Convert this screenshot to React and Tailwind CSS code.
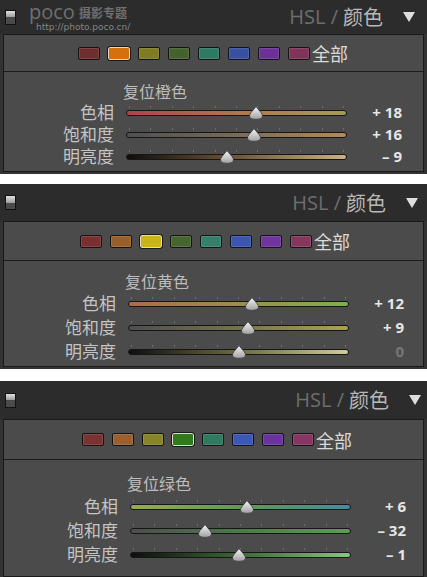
const cjk = { fontFamily: '"Noto Sans CJK SC", "Noto Sans", sans-serif' };

const panels = [
  {
    key: "orange",
    logo: true,
    headerH: "h-[34px]",
    headerPr: "pr-[12px]",
    swatchH: "h-[37px]",
    shift: "pl-0",
    sectionPt: "pt-[9px] pb-[4px]",
    titleH: "h-[20px]",
    rowH: "h-[22px]",
    gapTop: "mt-0",
    title: "复位橙色",
    selected: 1,
    swatches: ["#6e2e2e", "#d4700e", "#7f7c22", "#44612e", "#2f7a62", "#3a50a0", "#6a3294", "#803458"],
    rows: [
      { label: "色相", value: 18, text: "+ 18", track: "bg-[linear-gradient(to_right,#a8454d,#b2764a_50%,#a39d55)]" },
      { label: "饱和度", value: 16, text: "+ 16", track: "bg-[linear-gradient(to_right,#505050,#7a6a55_50%,#b58a58)]" },
      { label: "明亮度", value: -9, text: "– 9", track: "bg-[linear-gradient(to_right,#0e0e0e,#6e5638_50%,#cdb088)]" },
    ],
  },
  {
    key: "yellow",
    logo: false,
    headerH: "h-[37px]",
    headerPr: "pr-[9px]",
    swatchH: "h-[39px]",
    shift: "pl-[2px]",
    sectionPt: "pt-[10px] pb-[3px]",
    titleH: "h-[20px]",
    rowH: "h-[24px]",
    gapTop: "mt-[10px]",
    title: "复位黄色",
    selected: 2,
    swatches: ["#7a3030", "#9a5f28", "#c9b614", "#466530", "#35806a", "#3c55b0", "#70349c", "#86375e"],
    rows: [
      { label: "色相", value: 12, text: "+ 12", track: "bg-[linear-gradient(to_right,#b06a48,#9c8e4c_50%,#7fb04a)]" },
      { label: "饱和度", value: 9, text: "+ 9", track: "bg-[linear-gradient(to_right,#4e4e4e,#76724c_50%,#aaa450)]" },
      { label: "明亮度", value: 0, text: "0", dim: true, track: "bg-[linear-gradient(to_right,#0e0e0e,#6c6a40_50%,#d0cc9a)]" },
    ],
  },
  {
    key: "green",
    logo: false,
    headerH: "h-[38px]",
    headerPr: "pr-[6px]",
    swatchH: "h-[40px]",
    shift: "pl-[4px]",
    sectionPt: "pt-[12px] pb-[10px]",
    titleH: "h-[22px]",
    rowH: "h-[24px]",
    gapTop: "mt-[12px]",
    title: "复位绿色",
    selected: 3,
    swatches: ["#7a3232", "#9a6030", "#8a8428", "#2f7a1a", "#307a62", "#3a58b8", "#6a34a0", "#863660"],
    rows: [
      { label: "色相", value: 6, text: "+ 6", track: "bg-[linear-gradient(to_right,#9aac48,#5c9c50_50%,#3f8ea0)]" },
      { label: "饱和度", value: -32, text: "– 32", track: "bg-[linear-gradient(to_right,#4e4e4e,#4c7a48_50%,#58a050)]" },
      { label: "明亮度", value: -1, text: "– 1", track: "bg-[linear-gradient(to_right,#0e0e0e,#3a6a34_50%,#86c878)]" },
    ],
  },
];

function Slider({ value, track }) {
  const ticks = Array.from({ length: 11 });
  return (
    <div className="relative w-[221px] h-[14px] flex flex-col">
      <div className="flex justify-between px-[3px] h-[5px] pt-[1px]">
        {ticks.map((_, i) => (
          <span key={i} className="w-px h-[2px] bg-[#707070]" />
        ))}
      </div>
      <div className={`w-full h-[6px] rounded-full border border-[#161616] ${track}`} />
      {/* thumb */}
      <svg
        className="absolute top-[1px] -ml-[8px]"
        style={{ left: `${50 + value / 2}%` }}
        width="16"
        height="14"
        viewBox="0 0 16 14"
      >
        <defs>
          <linearGradient id="thumb" x1="0" y1="0" x2="0" y2="1">
            <stop offset="0" stopColor="#f4f4f4" />
            <stop offset="1" stopColor="#a0a0a0" />
          </linearGradient>
        </defs>
        <path
          d="M8 0.6 L13 6.5 Q15.4 9 14.2 11.4 Q13 13.4 8 13.4 Q3 13.4 1.8 11.4 Q0.6 9 3 6.5 Z"
          fill="url(#thumb)"
          stroke="#333"
          strokeWidth="0.8"
        />
      </svg>
    </div>
  );
}

function Panel({ p }) {
  return (
    <div className={`bg-[#333333] pb-[2px] ${p.gapTop}`}>
      {/* header */}
      <div className={`flex items-center bg-[#2c2c2c] ${p.headerH} ${p.headerPr}`}>
        <div className="ml-[5px] w-[11px] h-[15px] border border-[#111] flex flex-col">
          <div className="h-1/2 bg-[linear-gradient(#e0e0e0,#9c9c9c)]" />
          <div className="h-1/2 bg-[#4a4a4a]" />
        </div>
        {p.logo && (
          <div className="ml-[13px] flex flex-col">
            <div className="flex items-center gap-[4px] h-[20px]">
              <span className="text-[20px] text-[#6f6f6f] leading-[20px]" style={{ fontFamily: '"Open Sans", sans-serif' }}>
                poco
              </span>
              <span className="mt-[2px] text-[12px] font-bold text-[#707070] leading-[14px]" style={cjk}>
                摄影专题
              </span>
            </div>
            <span className="ml-[7px] text-[9px] text-[#858585] leading-[10px]" style={{ fontFamily: '"DejaVu Sans", sans-serif' }}>
              http://photo.poco.cn/
            </span>
          </div>
        )}
        <div className="ml-auto flex items-center text-[20px] leading-none" style={cjk}>
          <span className="text-[#6e6e6e]" style={{ fontFamily: '"Open Sans", sans-serif' }}>
            HSL /
          </span>
          <span className="ml-[5px] text-[#b8b8b8]">颜色</span>
        </div>
        <svg className="ml-[20px]" width="12" height="10" viewBox="0 0 12 10">
          <path d="M0 0 H12 L6 10 Z" fill="#dedede" />
        </svg>
      </div>

      {/* inner box */}
      <div className="mx-[3px] border border-[#1a1a1a] bg-[#4b4b4b]">
        <div className={`flex items-center border-b border-[#1c1c1c] ${p.swatchH} ${p.shift}`}>
          <div className="ml-[74px] flex items-center gap-[8px]">
            {p.swatches.map((c, i) => (
              <span
                key={i}
                className={
                  i === p.selected
                    ? "w-[22px] h-[13px] rounded-[2px] border border-[#e8d8c8] outline outline-1 outline-[#1a1a1a]"
                    : "w-[22px] h-[13px] rounded-[2px] border border-[#141414] shadow-[inset_0_0_0_1px_rgba(255,255,255,0.12)]"
                }
                style={{ backgroundColor: c }}
              />
            ))}
          </div>
          <span className="ml-[2px] text-[18px] leading-[20px] text-[#dadada]" style={cjk}>
            全部
          </span>
        </div>

        <div className={`${p.sectionPt} ${p.shift}`} style={cjk}>
          <div className={`flex items-center pl-[119px] text-[16px] leading-[18px] text-[#bdbdbd] ${p.titleH}`}>{p.title}</div>
          {p.rows.map((r) => (
            <div key={r.label} className={`flex items-center ${p.rowH}`}>
              <span className="w-[110px] text-right text-[17px] leading-[20px] text-[#c4c4c4]">{r.label}</span>
              <div className="ml-[12px]">
                <Slider value={r.value} track={r.track} />
              </div>
              <span
                className={`w-[55px] text-right text-[15px] font-bold leading-[18px] ${r.dim ? "text-[#777777]" : "text-[#e6e6e6]"}`}
                style={{ fontFamily: '"Open Sans", sans-serif' }}
              >
                {r.text}
              </span>
            </div>
          ))}
        </div>
      </div>
    </div>
  );
}

export default function App() {
  return (
    <div className="w-[427px] h-[577px] overflow-hidden bg-white">
      {panels.map((p) => (
        <Panel key={p.key} p={p} />
      ))}
    </div>
  );
}
